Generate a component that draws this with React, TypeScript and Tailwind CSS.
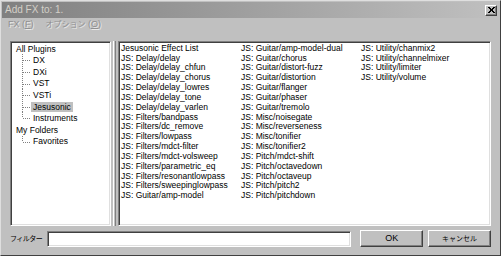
import React from "react";

const raised =
  "border border-t-white border-l-white border-r-[#404040] border-b-[#404040] shadow-[inset_-1px_-1px_0_#808080]";
const sunken =
  "border border-t-[#808080] border-l-[#808080] border-r-white border-b-white shadow-[inset_1px_1px_0_#404040,inset_-1px_-1px_0_#dfdfdf]";

const treeItems: { label: string; level: number; last?: boolean; selected?: boolean }[] = [
  { label: "All Plugins", level: 0 },
  { label: "DX", level: 1 },
  { label: "DXi", level: 1 },
  { label: "VST", level: 1 },
  { label: "VSTi", level: 1 },
  { label: "Jesusonic", level: 1, selected: true },
  { label: "Instruments", level: 1, last: true },
  { label: "My Folders", level: 0 },
  { label: "Favorites", level: 1, last: true },
];

const effects = [
  "Jesusonic Effect List",
  "JS: Delay/delay",
  "JS: Delay/delay_chfun",
  "JS: Delay/delay_chorus",
  "JS: Delay/delay_lowres",
  "JS: Delay/delay_tone",
  "JS: Delay/delay_varlen",
  "JS: Filters/bandpass",
  "JS: Filters/dc_remove",
  "JS: Filters/lowpass",
  "JS: Filters/mdct-filter",
  "JS: Filters/mdct-volsweep",
  "JS: Filters/parametric_eq",
  "JS: Filters/resonantlowpass",
  "JS: Filters/sweepinglowpass",
  "JS: Guitar/amp-model",
  "JS: Guitar/amp-model-dual",
  "JS: Guitar/chorus",
  "JS: Guitar/distort-fuzz",
  "JS: Guitar/distortion",
  "JS: Guitar/flanger",
  "JS: Guitar/phaser",
  "JS: Guitar/tremolo",
  "JS: Misc/noisegate",
  "JS: Misc/reverseness",
  "JS: Misc/tonifier",
  "JS: Misc/tonifier2",
  "JS: Pitch/mdct-shift",
  "JS: Pitch/octavedown",
  "JS: Pitch/octaveup",
  "JS: Pitch/pitch2",
  "JS: Pitch/pitchdown",
  "JS: Utility/chanmix2",
  "JS: Utility/channelmixer",
  "JS: Utility/limiter",
  "JS: Utility/volume",
];

const columns = [effects.slice(0, 16), effects.slice(16, 32), effects.slice(32)];

const TreeBranch: React.FC<{ last?: boolean }> = ({ last }) => (
  <svg width="16" height="12" className="shrink-0">
    <line x1="7.5" y1="0" x2="7.5" y2={last ? 6 : 12} stroke="#808080" strokeDasharray="1 1" />
    <line x1="8" y1="6.5" x2="15" y2="6.5" stroke="#808080" strokeDasharray="1 1" />
  </svg>
);

export default function App() {
  return (
    <div
      className="w-[501px] h-[256px] bg-[#c0c0c0] border border-t-[#dfdfdf] border-l-[#dfdfdf] border-r-[#404040] border-b-[#404040] flex flex-col text-black overflow-hidden"
      style={{ fontFamily: '"Liberation Sans", "Noto Sans CJK JP", sans-serif' }}
    >
      {/* title bar */}
      <div className="h-[16px] mx-[1px] mt-[1px] bg-gradient-to-r from-[#808080] to-[#c0c0c0] flex items-center justify-between pl-[3px] pr-[2px]">
        <span className="text-[10px] text-[#d4d0c8] leading-none">Add FX to: 1.</span>
        <div className={`w-[12px] h-[11px] bg-[#c0c0c0] ${raised} flex items-center justify-center`}>
          <svg width="7" height="6" viewBox="0 0 7 6">
            <path d="M0 0L6 6M1 0L7 6M6 0L0 6M7 0L1 6" stroke="black" strokeWidth="1" />
          </svg>
        </div>
      </div>

      {/* menu */}
      <div className="h-[13px] flex items-center gap-[12px] pl-[7px] text-[9px] text-[#909090] leading-none [text-shadow:1px_1px_0_#e8e8e8] whitespace-nowrap">
        <span>
          FX (<span className="underline">F</span>)
        </span>
        <span>
          <span className="text-[8px]">オプション</span> (<span className="underline">O</span>)
        </span>
      </div>

      {/* panels */}
      <div className="flex mt-[10px] ml-[9px] mr-[9px] h-[185px]">
        <div className={`w-[101px] h-full bg-white ${sunken} pt-[1px] pl-[4px] text-[8.5px] leading-none`}>
          {treeItems.map((it) => (
            <div key={it.label} className="h-[11.6px] flex items-center">
              {it.level === 1 && <TreeBranch last={it.last} />}
              <span
                className={`h-[10px] flex items-center px-[2px] ${
                  it.selected ? "bg-[#c0c0c0]" : ""
                } ${it.level === 1 ? "ml-[0px]" : "ml-[-1px]"}`}
              >
                {it.label}
              </span>
            </div>
          ))}
        </div>

        <div className="w-[7px] flex justify-center">
          <div className="w-[3px] h-full border-l border-l-white border-r border-r-[#808080]" />
        </div>

        <div className={`flex-1 h-full bg-white ${sunken} pt-[1px] pl-[2px] flex text-[8.5px] leading-none`}>
          {columns.map((col, i) => (
            <div key={i} className="w-[120px] flex flex-col">
              {col.map((e) => (
                <div key={e} className="h-[9.85px] flex items-center whitespace-nowrap text-black">
                  {e}
                </div>
              ))}
            </div>
          ))}
        </div>
      </div>

      {/* bottom row */}
      <div className="flex items-center mt-[4px] ml-[9px] mr-[9px] h-[17px]">
        <span className="w-[37px] text-[7px] leading-none whitespace-nowrap tracking-[-0.5px]">フィルター</span>
        <div className={`w-[305px] h-[16px] bg-white ${sunken}`} />
        <button className={`ml-[9px] w-[63px] h-[17px] bg-[#c0c0c0] ${raised} text-[9px] leading-none`}>
          OK
        </button>
        <button className={`ml-[5px] w-[63px] h-[17px] bg-[#c0c0c0] ${raised} text-[7px] leading-none`}>
          キャンセル
        </button>
      </div>
    </div>
  );
}
